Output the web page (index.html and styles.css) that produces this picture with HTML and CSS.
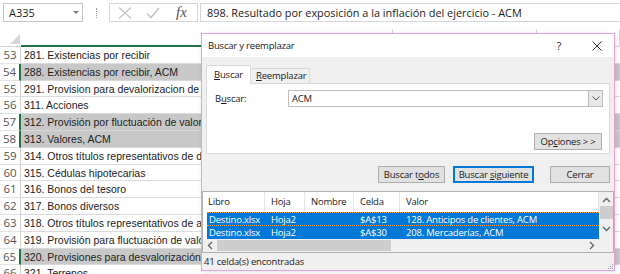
FILE: index.html
```html
<!DOCTYPE html>
<html lang="es">
<head>
<meta charset="UTF-8" />
<title>Buscar y reemplazar</title>
<link rel="stylesheet" href="styles.css">
</head>
<body>
  <div class="formula-bar">
    <div class="namebox">A335<span class="caret"></span></div>
    <div class="bar-sep"><span></span></div>
    <div class="fx-box">
      <svg class="ico-x" width="14" height="12" viewBox="0 0 14 12"><path d="M1 0.5 L13 11.5 M13 0.5 L1 11.5" stroke="#c4c4c4" stroke-width="1.3" fill="none"/></svg>
      <svg class="ico-ok" width="14" height="12" viewBox="0 0 14 12"><path d="M1 6.5 L5 10.5 L13 1" stroke="#c4c4c4" stroke-width="1.6" fill="none"/></svg>
      <span class="fx">fx</span>
    </div>
    <div class="formula">898. Resultado por exposición a la inflación del ejercicio - ACM</div>
  </div>

  <div class="col-head">
    <div class="corner"><svg width="10" height="10" viewBox="0 0 10 10"><path d="M10 0 L10 10 L0 10 Z" fill="#d6d6d6"/></svg></div>
    <div class="col col-a"></div>
    <div class="col col-b"></div>
    <div class="col col-c"></div>
  </div>

  <div class="sheet">
    <div class="row"><div class="rh">53</div><div class="cell">281. Existencias por recibir</div></div>
    <div class="row sel"><div class="rh">54</div><div class="cell">288. Existencias por recibir, ACM</div></div>
    <div class="row"><div class="rh">55</div><div class="cell">291. Provision para devalorizacion de existencias</div></div>
    <div class="row"><div class="rh">56</div><div class="cell">311. Acciones</div></div>
    <div class="row sel"><div class="rh">57</div><div class="cell">312. Provisión por fluctuación de valores</div></div>
    <div class="row sel"><div class="rh">58</div><div class="cell">313. Valores, ACM</div></div>
    <div class="row"><div class="rh">59</div><div class="cell">314. Otros títulos representativos de deuda</div></div>
    <div class="row"><div class="rh">60</div><div class="cell">315. Cédulas hipotecarias</div></div>
    <div class="row"><div class="rh">61</div><div class="cell">316. Bonos del tesoro</div></div>
    <div class="row"><div class="rh">62</div><div class="cell">317. Bonos diversos</div></div>
    <div class="row"><div class="rh">63</div><div class="cell">318. Otros títulos representativos de acciones</div></div>
    <div class="row"><div class="rh">64</div><div class="cell">319. Provisión para fluctuación de valores</div></div>
    <div class="row sel"><div class="rh">65</div><div class="cell">320. Provisiones para desvalorización de valores</div></div>
    <div class="row"><div class="rh">66</div><div class="cell">321. Terrenos</div></div>
  </div>

  <div class="dialog">
    <div class="dlg-title">
      <span class="dlg-name">Buscar y reemplazar</span>
      <span class="dlg-help">?</span>
      <svg class="dlg-close" width="10" height="10" viewBox="0 0 10 10"><path d="M0.5 0.5 L9.5 9.5 M9.5 0.5 L0.5 9.5" stroke="#333" stroke-width="1" fill="none"/></svg>
    </div>

    <div class="tabs">
      <div class="tab active"><u>B</u>uscar</div>
      <div class="tab tab-rep"><u>R</u>eemplazar</div>
    </div>

    <div class="panel">
      <div class="find-row">
        <label class="find-label">B<u>u</u>scar:</label>
        <div class="combo">
          <span class="combo-text">ACM</span>
          <span class="combo-btn"><svg width="8" height="5" viewBox="0 0 8 5"><path d="M0.5 0.5 L4 4 L7.5 0.5" stroke="#555" fill="none"/></svg></span>
        </div>
      </div>
      <div class="options-row">
        <button class="btn">Op<u>c</u>iones &gt; &gt;</button>
      </div>
    </div>

    <div class="actions">
      <button class="btn btn-all">Buscar t<u>o</u>dos</button>
      <button class="btn btn-next">Buscar <u>s</u>iguiente</button>
      <button class="btn btn-close">Cerrar</button>
    </div>

    <div class="list">
      <div class="list-main">
        <div class="list-head">
          <div>Libro</div><div>Hoja</div><div>Nombre</div><div>Celda</div><div>Valor</div>
        </div>
        <div class="list-row focus">
          <div>Destino.xlsx</div><div>Hoja2</div><div></div><div>$A$13</div><div>128. Anticipos de clientes, ACM</div>
        </div>
        <div class="list-row">
          <div>Destino.xlsx</div><div>Hoja2</div><div></div><div>$A$30</div><div>208. Mercaderías, ACM</div>
        </div>
      </div>
      <div class="vscroll">
        <svg width="9" height="6" viewBox="0 0 9 6"><path d="M1 5 L4.5 1.5 L8 5" stroke="#606060" stroke-width="1.3" fill="none"/></svg>
        <span class="vthumb"></span>
        <svg width="9" height="6" viewBox="0 0 9 6"><path d="M1 1 L4.5 4.5 L8 1" stroke="#606060" stroke-width="1.3" fill="none"/></svg>
      </div>
      <div class="hscroll">
        <svg width="6" height="9" viewBox="0 0 6 9"><path d="M5 1 L1.5 4.5 L5 8" stroke="#606060" stroke-width="1.3" fill="none"/></svg>
        <span class="hthumb"></span>
        <svg class="h-right" width="6" height="9" viewBox="0 0 6 9"><path d="M1 1 L4.5 4.5 L1 8" stroke="#606060" stroke-width="1.3" fill="none"/></svg>
      </div>
      <div class="scroll-corner"></div>
    </div>

    <div class="status">
      41 celda(s) encontradas
      <svg class="grip" width="6" height="6" viewBox="0 0 6 6"><path d="M5 1h1v1h-1zM3 3h1v1h-1zM5 3h1v1h-1zM1 5h1v1h-1zM3 5h1v1h-1zM5 5h1v1h-1z" fill="#a0a0a0"/></svg>
    </div>
  </div>
</body>
</html>
```

FILE: styles.css
```css
* {
  box-sizing: border-box;
}
body {
  margin: 0;
  width: 620px;
  height: 274px;
  overflow: hidden;
  position: relative;
  background: #fff;
  color: #222;
  font-family: 'Open Sans', 'Noto Sans', sans-serif;
}

/* barra de fórmulas */
.formula-bar {
  display: flex;
  align-items: flex-start;
  height: 25px;
  padding: 3px 0 0 3px;
}
.namebox {
  width: 80px;
  height: 19px;
  border: 1px solid #c6c6c6;
  display: flex;
  align-items: center;
  padding-left: 5px;
  font-size: 11px;
}
.caret {
  margin-left: auto;
  margin-right: 3px;
  border-left: 3px solid transparent;
  border-right: 3px solid transparent;
  border-top: 3px solid #777;
}
.bar-sep {
  width: 26px;
  height: 19px;
  display: flex;
  justify-content: center;
  align-items: center;
}
.bar-sep span {
  height: 10px;
  border-left: 1px dotted #9a9a9a;
}
.fx-box {
  width: 89px;
  height: 19px;
  border: 1px solid #d6d6d6;
  display: flex;
  align-items: center;
  padding-left: 8px;
  gap: 14px;
}
.fx {
  font-family: 'Liberation Serif', serif;
  font-style: italic;
  font-size: 15px;
  color: #555;
  margin-left: 2px;
}
.formula {
  margin-left: 2px;
  flex: 1;
  height: 19px;
  border: 1px solid #d6d6d6;
  border-right: none;
  padding-left: 6px;
  font-size: 10.9px;
  line-height: 17px;
  white-space: nowrap;
}

/* encabezado de columnas */
.col-head {
  display: flex;
  height: 18px;
  margin-top: 4px;
}
.corner {
  width: 21px;
  display: flex;
  justify-content: flex-end;
  align-items: flex-end;
  padding: 0 1px 2px 0;
  border-bottom: 1px solid #d4d4d4;
}
.col {
  border-right: 1px solid #d4d4d4;
  border-bottom: 1px solid #d4d4d4;
}
.col-a {
  width: 372px;
  border-bottom: 2px solid #217346;
}
.col-b {
  width: 144px;
}
.col-c {
  flex: 1;
}

/* hoja */
.row {
  display: flex;
  height: 16.8px;
}
.rh {
  width: 21px;
  flex: none;
  border-right: 1px solid #cfcfcf;
  border-bottom: 1px solid #e4e4e4;
  text-align: center;
  font-size: 11.5px;
  line-height: 16px;
  color: #555;
}
.cell {
  flex: 1;
  border-bottom: 1px solid #dadada;
  padding-left: 3px;
  font-family: 'Liberation Sans', Arial, sans-serif;
  font-size: 10.5px;
  line-height: 16px;
  white-space: nowrap;
  overflow: hidden;
}
.row.sel .rh {
  border-right: 2px solid #217346;
}
.row.sel .cell {
  background: #c8c8c8;
  border-bottom-color: #d8d8d8;
}

/* cuadro de diálogo */
.dialog {
  position: absolute;
  left: 201px;
  top: 33px;
  width: 414px;
  height: 238px;
  border: 1px solid #e2a2e2;
  background: #f0f0f0;
  display: flex;
  flex-direction: column;
  font-size: 9.5px;
  letter-spacing: -0.2px;
  color: #1a1a1a;
  box-shadow: 1px 1px 4px rgba(0,0,0,0.12);
}
.dlg-title {
  height: 23px;
  background: #fff;
  display: flex;
  align-items: center;
  padding-left: 6px;
  font-size: 9.5px;
  flex: none;
}
.dlg-help {
  margin-left: auto;
  margin-right: 31px;
  font-size: 10.5px;
}
.dlg-close {
  margin-right: 12px;
}
.tabs {
  height: 26px;
  display: flex;
  align-items: flex-end;
  padding-left: 4px;
  flex: none;
}
.tab {
  height: 15px;
  padding: 0 5px;
  border: 1px solid #d9d9d9;
  border-bottom: none;
  line-height: 14px;
  background: #f0f0f0;
}
.tab + .tab {
  border-left: none;
}
.tab-rep {
  width: 59px;
}
.tab.active {
  width: 45px;
  height: 19px;
  margin-bottom: -1px;
  background: #fff;
  line-height: 17px;
  position: relative;
  padding-left: 7px;
}
.panel {
  height: 71px;
  margin: 0 4px;
  background: #fff;
  border: 1px solid #d9d9d9;
  flex: none;
  padding: 6px 6px 0 8px;
  display: flex;
  flex-direction: column;
}
.find-row {
  display: flex;
  align-items: center;
}
.find-label {
  width: 73px;
}
.combo {
  width: 315px;
  height: 17px;
  border: 1px solid #bcbcbc;
  display: flex;
  align-items: center;
  padding-left: 3px;
}
.combo-btn {
  margin-left: auto;
  width: 14px;
  height: 15px;
  background: #e8e8e8;
  border-left: 1px solid #bcbcbc;
  display: flex;
  justify-content: center;
  align-items: center;
}
.options-row {
  display: flex;
  justify-content: flex-end;
  margin-top: 26px;
  padding-right: 1px;
}
.btn {
  height: 17px;
  padding: 0;
  border: 1px solid #adadad;
  background: #e1e1e1;
  font-family: inherit;
  font-size: 9.5px;
  letter-spacing: -0.2px;
  color: #1a1a1a;
}
.options-row .btn {
  width: 68px;
}
.actions {
  display: flex;
  justify-content: flex-end;
  height: 17px;
  margin-top: 12px;
  padding-right: 4px;
  flex: none;
}
.btn-all {
  width: 67px;
}
.btn-next {
  width: 81px;
  margin-left: 8px;
  border: 2px solid #0078d7;
}
.btn-close {
  width: 60px;
  margin-left: 16px;
}
.list {
  margin-top: 8px;
  height: 62px;
  border: 1px solid #b0b0b0;
  background: #fff;
  display: grid;
  grid-template-columns: 1fr 14px;
  grid-template-rows: 47px 13px;
  flex: none;
}
.list-head {
  display: grid;
  grid-template-columns: 62px 40px 49px 46px 1fr;
  height: 20px;
  align-items: center;
}
.list-head div {
  padding-left: 6px;
  height: 100%;
  line-height: 20px;
  border-right: 1px solid #e5e5e5;
}
.list-head div:first-child {
  padding-left: 5px;
}
.list-row {
  display: grid;
  grid-template-columns: 58px 40px 49px 46px 1fr;
  margin-left: 4px;
  height: 13.5px;
  line-height: 13px;
  background: #0078d7;
  color: #fff;
  white-space: nowrap;
}
.list-row div {
  padding-left: 6px;
  overflow: hidden;
}
.list-row div:first-child {
  padding-left: 2px;
}
.list-row.focus {
  border-top: 1px dotted #f0a030;
  border-bottom: 1px dotted #f0a030;
}
.vscroll {
  display: flex;
  flex-direction: column;
  align-items: center;
  padding-top: 5px;
  background: #f0f0f0;
}
.vthumb {
  width: 13px;
  height: 13px;
  margin: 3px 0 7px;
  background: #cdcdcd;
}
.hscroll {
  display: flex;
  align-items: center;
  padding-left: 4px;
  background: #f0f0f0;
}
.hthumb {
  width: 174px;
  height: 11px;
  margin-left: 4px;
  background: #cdcdcd;
}
.h-right {
  margin-left: auto;
  margin-right: 4px;
}
.scroll-corner {
  background: #f0f0f0;
}
.status {
  flex: 1;
  display: flex;
  align-items: center;
  padding-left: 2px;
  position: relative;
}
.grip {
  position: absolute;
  right: 1px;
  bottom: 1px;
}
```
